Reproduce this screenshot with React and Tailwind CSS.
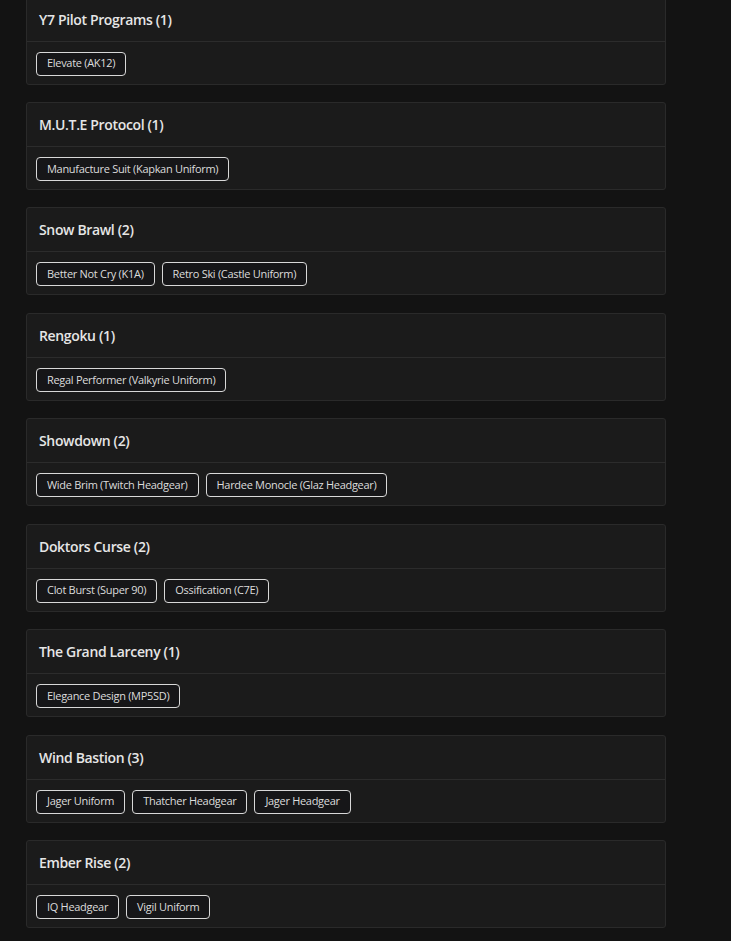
const groups = [
  { title: "Y7 Pilot Programs (1)", items: ["Elevate (AK12)"] },
  { title: "M.U.T.E Protocol (1)", items: ["Manufacture Suit (Kapkan Uniform)"] },
  { title: "Snow Brawl (2)", items: ["Better Not Cry (K1A)", "Retro Ski (Castle Uniform)"] },
  { title: "Rengoku (1)", items: ["Regal Performer (Valkyrie Uniform)"] },
  { title: "Showdown (2)", items: ["Wide Brim (Twitch Headgear)", "Hardee Monocle (Glaz Headgear)"] },
  { title: "Doktors Curse (2)", items: ["Clot Burst (Super 90)", "Ossification (C7E)"] },
  { title: "The Grand Larceny (1)", items: ["Elegance Design (MP5SD)"] },
  { title: "Wind Bastion (3)", items: ["Jager Uniform", "Thatcher Headgear", "Jager Headgear"] },
  { title: "Ember Rise (2)", items: ["IQ Headgear", "Vigil Uniform"] },
];

export default function App() {
  return (
    <div
      className="min-h-screen w-full bg-[#131313] overflow-hidden"
      style={{ fontFamily: '"Open Sans", "Liberation Sans", sans-serif' }}
    >
      <div className="pl-[26px] w-[666px] mt-[-3.43px] flex flex-col gap-[17.43px]">
        {groups.map((g) => (
          <div key={g.title} className="border border-[#2a2a2a] rounded-[3px] bg-[#1b1b1b]">
            <div className="h-[44px] flex items-center px-3 border-b border-[#2c2c2c]">
              <span className="text-[14px] font-semibold text-[#e6e6e6] tracking-[-0.35px]">{g.title}</span>
            </div>
            <div className="h-[42px] flex items-start gap-[7px] pl-[9px] pt-[10px]">
              {g.items.map((it) => (
                <span
                  key={it}
                  className="h-[24px] flex items-center px-[10px] border border-[#d8d8d8] rounded-[4px] bg-[#161618] text-[11px] text-[#dcdcdc] tracking-[-0.3px]"
                >
                  {it}
                </span>
              ))}
            </div>
          </div>
        ))}
      </div>
    </div>
  );
}
